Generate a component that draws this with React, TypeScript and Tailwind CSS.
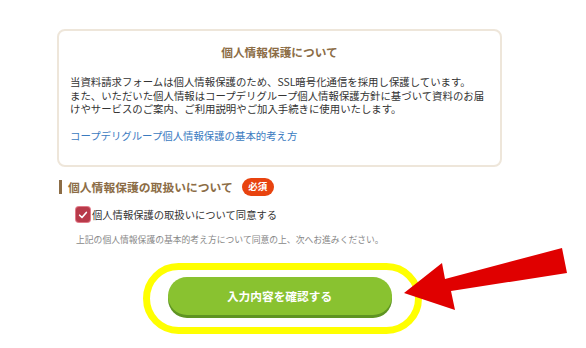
const jp = { fontFamily: '"Noto Sans CJK JP", "Noto Sans", sans-serif' };

export default function App() {
  return (
    <div className="relative w-[586px] h-[348px] overflow-hidden bg-white text-[#333]" style={jp}>
      <div className="ml-[57px] w-[445px] pt-[29px]">
        <div className="rounded-lg border-2 border-[#eee6da] px-[11px] pt-[13px] pb-[22px]">
          <h2 className="text-center text-[11.7px] leading-[16px] font-bold text-[#8c6d46]">
            個人情報保護について
          </h2>
          <p className="mt-[15px] text-[10.4px] leading-[13.5px]">
            当資料請求フォームは個人情報保護のため、SSL暗号化通信を採用し保護しています。
            <br />
            また、いただいた個人情報はコープデリグループ個人情報保護方針に基づいて資料のお届
            <br />
            けやサービスのご案内、ご利用説明やご加入手続きに使用いたします。
          </p>
          <a className="mt-[13px] block text-[10.4px] leading-[14px] text-[#3b7bbf]">
            コープデリグループ個人情報保護の基本的考え方
          </a>
        </div>

        <div className="mt-[11px] flex items-center h-[18px] pl-[2px]">
          <span className="w-[3px] h-[14px] bg-[#8c6d46]" />
          <span className="ml-[6px] text-[11.8px] font-bold text-[#8c6d46] leading-[18px]">
            個人情報保護の取扱いについて
          </span>
          <span className="ml-[9px] h-[18px] w-[32px] rounded-full bg-[#e8430f] text-white text-[9.5px] font-bold flex items-center justify-center">
            必須
          </span>
        </div>

        <div className="mt-[11px] ml-[19px] flex items-center h-[16px]">
          <span className="w-[14px] h-[15px] rounded-[3px] bg-[#b83a4a] ring-1 ring-[#e07a88] flex items-center justify-center">
            <svg viewBox="0 0 12 12" className="w-[10px] h-[10px]">
              <path d="M2 6.3 L4.8 9 L10 3" fill="none" stroke="white" strokeWidth="2" strokeLinecap="round" strokeLinejoin="round" />
            </svg>
          </span>
          <span className="ml-[2px] text-[10.3px] leading-[16px]">個人情報保護の取扱いについて同意する</span>
        </div>

        <p className="mt-[11px] ml-[19px] text-[8.8px] leading-[12px] text-[#888]">
          上記の個人情報保護の基本的考え方について同意の上、次へお進みください。
        </p>

        <div className="mt-[31px] flex justify-center">
          <button className="w-[224px] h-[38px] rounded-full bg-[#89c230] shadow-[0_3px_0_#5e9422] text-white text-[11.7px] font-bold">
            入力内容を確認する
          </button>
        </div>
      </div>

      <div className="absolute left-[143px] top-[263px] w-[279px] h-[71px] rounded-full border-[7px] border-[#ffff00]" />

      <svg className="absolute inset-0" width="586" height="348">
        <polygon points="404,293 442,263 445,279 562,248 567,273 451,291 455,310" fill="#e00000" />
      </svg>
    </div>
  );
}
